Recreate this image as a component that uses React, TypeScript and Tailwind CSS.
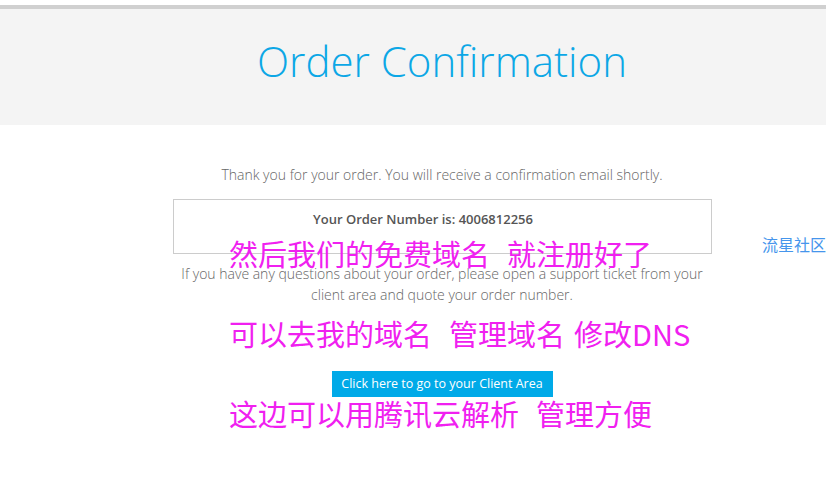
import React from "react";

const cjk = { fontFamily: '"Noto Sans CJK SC", sans-serif' };

export default function App() {
  return (
    <div
      className="relative w-[826px] h-[490px] overflow-hidden bg-white"
      style={{ fontFamily: '"Open Sans", "Noto Sans CJK SC", sans-serif' }}
    >
      <div className="h-[5px] bg-white" />
      <div className="h-[4px] bg-[#d0d0d0]" />
      <div className="h-[116px] bg-[#f4f4f4] pl-[58px] flex justify-center pt-[24px]">
        <h1 className="text-[42px] leading-[56px] font-light text-[#0ca7e6]">Order Confirmation</h1>
      </div>
      <div className="pl-[58px] flex flex-col items-center">
        <p className="mt-[40px] text-[14px] leading-[20px] font-light text-[#666]">
          Thank you for your order. You will receive a confirmation email shortly.
        </p>
        <div className="mt-[14px] w-[539px] h-[55px] border border-[#cccccc] flex justify-center pt-[9px] pr-[38px]">
          <span className="text-[13px] leading-[20px] font-semibold text-[#555]">
            Your Order Number is: 4006812256
          </span>
        </div>
        <p className="mt-[9px] w-[530px] text-center text-[14px] leading-[21px] font-light text-[#666]">
          If you have any questions about your order, please open a support ticket from your client area and quote your order number.
        </p>
        <button className="mt-[66px] w-[221px] h-[26px] bg-[#00aae8] text-white text-[12.5px] font-normal">
          Click here to go to your Client Area
        </button>
      </div>

      <div
        className="absolute left-[229px] top-[236px] text-[29px] leading-[34px] text-[#f020f0] whitespace-nowrap flex"
        style={cjk}
      >
        <span>然后我们的免费域名</span>
        <span className="inline-block w-[17px]" />
        <span>就注册好了</span>
      </div>
      <div
        className="absolute left-[229px] top-[316px] text-[29px] leading-[34px] text-[#f020f0] whitespace-nowrap flex"
        style={cjk}
      >
        <span>可以去我的域名</span>
        <span className="inline-block w-[17px]" />
        <span>管理域名</span>
        <span className="inline-block w-[9px]" />
        <span>修改DNS</span>
      </div>
      <div
        className="absolute left-[229px] top-[396px] text-[29px] leading-[34px] text-[#f020f0] whitespace-nowrap flex"
        style={cjk}
      >
        <span>这边可以用腾讯云解析</span>
        <span className="inline-block w-[17px]" />
        <span>管理方便</span>
      </div>
      <div
        className="absolute left-[762px] top-[234px] text-[16px] leading-[20px] text-[#4595ec] whitespace-pre"
        style={cjk}
      >
        流星社区
      </div>
    </div>
  );
}
